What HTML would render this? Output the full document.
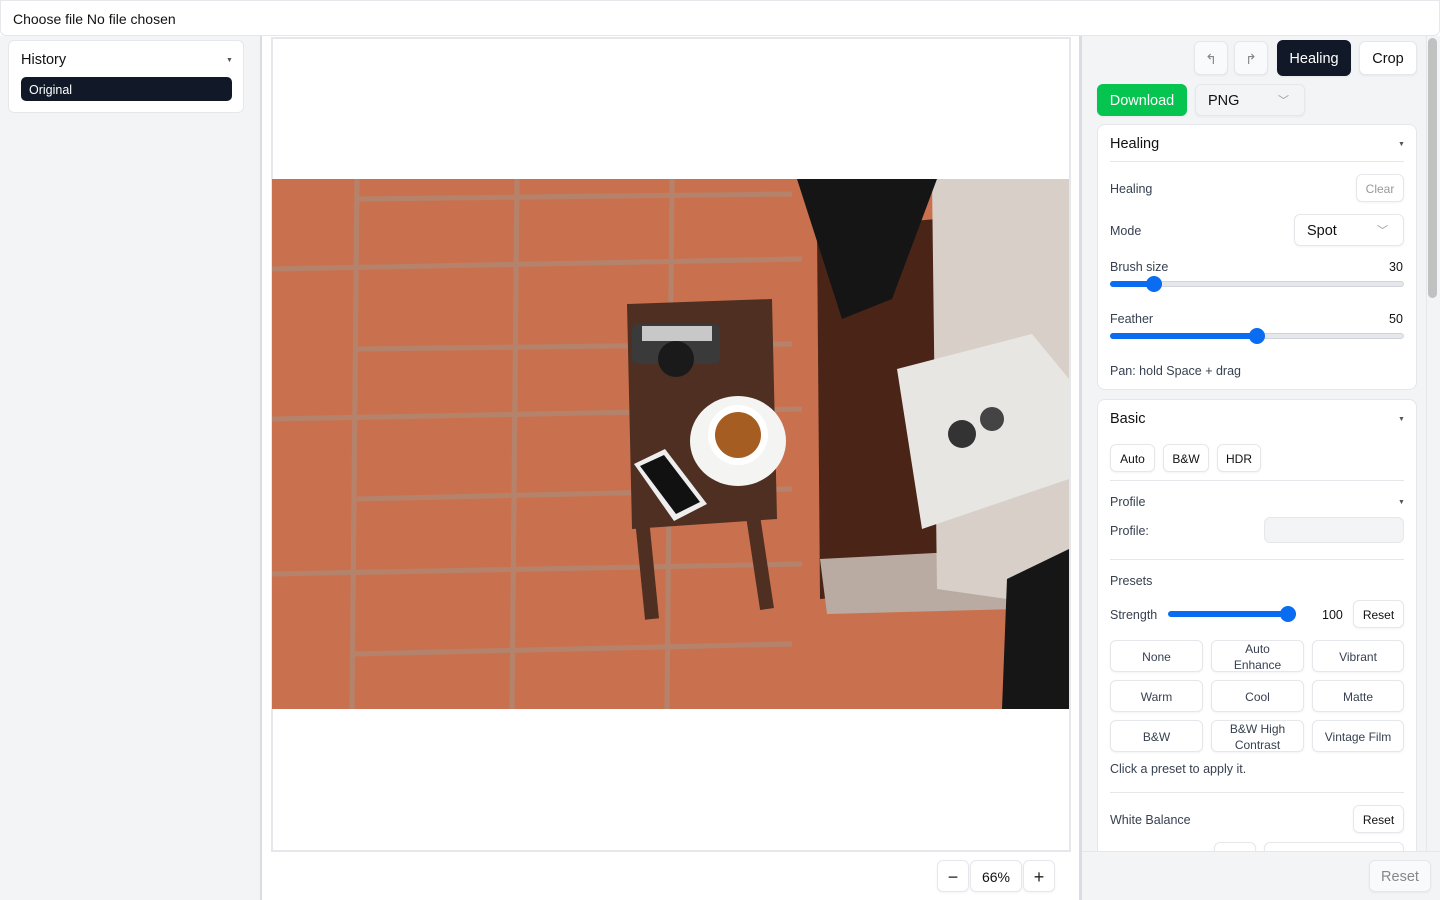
<!DOCTYPE html>
<html><head><style>
*{box-sizing:border-box;margin:0;padding:0}
body{width:1440px;height:900px;overflow:hidden;background:#fff;font-family:"Liberation Sans",sans-serif;position:relative;color:#111}
.a{position:absolute}
.btn{position:absolute;border:1px solid #e5e7eb;border-radius:6px;background:#fff;font-size:12px;display:flex;align-items:center;justify-content:center;text-align:center;line-height:16px;color:#374151;box-shadow:0 1px 2px rgba(0,0,0,.05);padding-top:1px}
.lbl{position:absolute;font-size:12.5px;color:#374151;margin-top:1px}
.hr{position:absolute;height:1px;background:#e5e7eb}
.track{position:absolute;height:6px;border-radius:3px;background:#e5e7eb;border:1px solid #d1d5db}
.fill{position:absolute;height:6px;border-radius:3px;background:#0a6cf0}
.knob{position:absolute;width:16px;height:16px;border-radius:50%;background:#0a6cf0}
.tri{position:absolute;font-size:7px;color:#555}
</style></head><body>
<div class="a" style="left:0;top:0;width:1440px;height:36px;border:1px solid #e5e7eb;border-radius:0 0 6px 6px;background:#fff"></div>
<div class="a" style="left:13px;top:11px;font-size:14px;color:#111">Choose file No file chosen</div>

<div class="a" style="left:0;top:36px;width:253px;height:864px;background:#f3f4f6"></div>
<div class="a" style="left:253px;top:36px;width:8px;height:864px;background:#f3f4f6"></div>
<div class="a" style="left:260px;top:36px;width:2px;height:864px;background:#d8dce3"></div>
<div class="a" style="left:8px;top:40px;width:236px;height:73px;background:#fff;border:1px solid #e5e7eb;border-radius:6px"></div>
<div class="a" style="left:21px;top:52px;font-size:14.5px">History</div>
<div class="tri" style="left:226px;top:57px">▼</div>
<div class="a" style="left:21px;top:77px;width:211px;height:24px;background:#111827;border-radius:5px;color:#fff;font-size:12.5px;padding:6px 8px">Original</div>

<div class="a" style="left:271px;top:37px;width:800px;height:815px;border:2px solid #e5e7eb;background:#fff"></div>
<svg class="a" style="left:272px;top:179px" width="797" height="530" viewBox="0 0 797 530">
<rect width="797" height="530" fill="#c9714e"/>
<g stroke="#a99080" stroke-width="5" opacity=".6">
<line x1="0" y1="90" x2="530" y2="80"/><line x1="0" y1="240" x2="530" y2="230"/><line x1="0" y1="395" x2="530" y2="385"/>
<line x1="85" y1="0" x2="80" y2="530"/><line x1="245" y1="0" x2="240" y2="530"/><line x1="400" y1="0" x2="395" y2="530"/>
<line x1="85" y1="20" x2="520" y2="15"/><line x1="85" y1="170" x2="520" y2="165"/><line x1="85" y1="320" x2="520" y2="310"/><line x1="80" y1="475" x2="520" y2="465"/>
</g>
<path d="M545 50 L665 40 L665 410 L548 420 Z" fill="#4a2416"/>
<path d="M548 380 L740 370 L745 430 L555 435 Z" fill="#b9aba2"/>
<path d="M660 0 L797 0 L797 530 L740 530 L735 420 L665 410 Z" fill="#d8d0c8"/>
<path d="M525 0 L665 0 L620 120 L570 140 Z" fill="#151515"/>
<path d="M625 190 L760 155 L797 200 L797 300 L650 350 Z" fill="#e8e6e2"/>
<circle cx="690" cy="255" r="14" fill="#333"/><circle cx="720" cy="240" r="12" fill="#444"/>
<path d="M735 400 L797 370 L797 530 L730 530 Z" fill="#161616"/>
<path d="M355 125 L500 120 L505 340 L360 350 Z" fill="#4e2f22"/>
<path d="M370 340 L380 440 M480 330 L495 430" stroke="#4e2f22" stroke-width="14"/>
<ellipse cx="466" cy="262" rx="48" ry="45" fill="#f4f4f2"/>
<circle cx="466" cy="256" r="30" fill="#fff"/><circle cx="466" cy="256" r="23" fill="#a55d22"/>
<rect x="360" y="145" width="88" height="40" rx="6" fill="#3a3a3a"/>
<rect x="370" y="147" width="70" height="15" fill="#c8c8c8"/>
<circle cx="404" cy="180" r="18" fill="#1a1a1a"/>
<path d="M362 285 L393 270 L435 325 L402 342 Z" fill="#eee"/><path d="M368 287 L392 276 L428 323 L404 335 Z" fill="#111"/>
</svg>

<div class="btn" style="left:937px;top:860px;width:32px;height:32px;font-size:18px;color:#222">−</div>
<div class="btn" style="left:970px;top:860px;width:52px;height:32px;font-size:14px;color:#111">66%</div>
<div class="btn" style="left:1023px;top:860px;width:32px;height:32px;font-size:18px;color:#222">+</div>

<div class="a" style="left:1079px;top:36px;width:3px;height:864px;background:#d8dce3"></div>
<div class="a" style="left:1082px;top:36px;width:358px;height:864px;background:#f3f4f6"></div>
<div class="a" style="left:1428px;top:38px;width:9px;height:260px;background:#c1c1c1;border-radius:5px"></div>
<div class="a" style="left:1426px;top:36px;width:1px;height:815px;background:#e5e7eb"></div>

<div class="btn" style="left:1194px;top:41px;width:34px;height:34px;background:#f9fafb;color:#888;font-size:14px">↰</div>
<div class="btn" style="left:1234px;top:41px;width:34px;height:34px;background:#f9fafb;color:#888;font-size:14px">↱</div>
<div class="btn" style="left:1277px;top:40px;width:74px;height:36px;background:#111827;border-color:#111827;color:#fff;font-size:14.5px">Healing</div>
<div class="btn" style="left:1359px;top:41px;width:58px;height:34px;color:#111;font-size:14.5px">Crop</div>
<div class="btn" style="left:1097px;top:84px;width:90px;height:32px;background:#05c44f;border-color:#05c44f;color:#fff;font-size:14.5px">Download</div>
<div class="btn" style="left:1195px;top:84px;width:110px;height:32px;background:#f3f4f6;justify-content:flex-start;padding-left:12px;color:#111;font-size:14.5px">PNG<span style="position:absolute;left:82px;color:#999;font-size:11px">﹀</span></div>

<div class="a" style="left:1097px;top:124px;width:320px;height:266px;background:#fff;border:1px solid #e5e7eb;border-radius:8px"></div>
<div class="a" style="left:1110px;top:136px;font-size:14.5px">Healing</div>
<div class="tri" style="left:1398px;top:141px">▼</div>
<div class="hr" style="left:1110px;top:161px;width:294px"></div>
<div class="lbl" style="left:1110px;top:181px">Healing</div>
<div class="btn" style="left:1356px;top:174px;width:48px;height:28px;color:#999">Clear</div>
<div class="lbl" style="left:1110px;top:223px">Mode</div>
<div class="btn" style="left:1294px;top:214px;width:110px;height:32px;justify-content:flex-start;padding-left:12px;color:#111;font-size:14.5px">Spot<span style="position:absolute;left:82px;color:#999;font-size:11px">﹀</span></div>
<div class="lbl" style="left:1110px;top:259px">Brush size</div><div class="lbl" style="left:1389px;top:259px;color:#111">30</div>
<div class="track" style="left:1110px;top:281px;width:294px"></div><div class="fill" style="left:1110px;top:281px;width:44px"></div><div class="knob" style="left:1146px;top:276px"></div>
<div class="lbl" style="left:1110px;top:311px">Feather</div><div class="lbl" style="left:1389px;top:311px;color:#111">50</div>
<div class="track" style="left:1110px;top:333px;width:294px"></div><div class="fill" style="left:1110px;top:333px;width:147px"></div><div class="knob" style="left:1249px;top:328px"></div>
<div class="lbl" style="left:1110px;top:363px">Pan: hold Space + drag</div>

<div class="a" style="left:1097px;top:399px;width:320px;height:460px;background:#fff;border:1px solid #e5e7eb;border-radius:8px"></div>
<div class="a" style="left:1110px;top:411px;font-size:14.5px">Basic</div>
<div class="tri" style="left:1398px;top:416px">▼</div>
<div class="btn" style="left:1110px;top:444px;width:45px;height:28px;color:#111">Auto</div>
<div class="btn" style="left:1163px;top:444px;width:46px;height:28px;color:#111">B&amp;W</div>
<div class="btn" style="left:1217px;top:444px;width:44px;height:28px;color:#111">HDR</div>
<div class="hr" style="left:1110px;top:480px;width:294px"></div>
<div class="lbl" style="left:1110px;top:494px">Profile</div>
<div class="tri" style="left:1398px;top:499px">▼</div>
<div class="lbl" style="left:1110px;top:523px">Profile:</div>
<div class="a" style="left:1264px;top:517px;width:140px;height:26px;background:#f3f4f6;border:1px solid #e5e7eb;border-radius:6px"></div>
<div class="hr" style="left:1110px;top:559px;width:294px"></div>
<div class="lbl" style="left:1110px;top:573px">Presets</div>
<div class="lbl" style="left:1110px;top:607px">Strength</div>
<div class="fill" style="left:1168px;top:611px;width:128px"></div><div class="knob" style="left:1280px;top:606px"></div>
<div class="lbl" style="left:1322px;top:607px;color:#111">100</div>
<div class="btn" style="left:1353px;top:600px;width:51px;height:28px;color:#111">Reset</div>
<div class="btn" style="left:1110px;top:640px;width:93px;height:32px">None</div>
<div class="btn" style="left:1211px;top:640px;width:93px;height:32px">Auto<br>Enhance</div>
<div class="btn" style="left:1312px;top:640px;width:92px;height:32px">Vibrant</div>
<div class="btn" style="left:1110px;top:680px;width:93px;height:32px">Warm</div>
<div class="btn" style="left:1211px;top:680px;width:93px;height:32px">Cool</div>
<div class="btn" style="left:1312px;top:680px;width:92px;height:32px">Matte</div>
<div class="btn" style="left:1110px;top:720px;width:93px;height:32px">B&amp;W</div>
<div class="btn" style="left:1211px;top:720px;width:93px;height:32px">B&amp;W High<br>Contrast</div>
<div class="btn" style="left:1312px;top:720px;width:92px;height:32px">Vintage Film</div>
<div class="lbl" style="left:1110px;top:761px">Click a preset to apply it.</div>
<div class="hr" style="left:1110px;top:792px;width:294px"></div>
<div class="lbl" style="left:1110px;top:812px">White Balance</div>
<div class="btn" style="left:1353px;top:805px;width:51px;height:28px;color:#111">Reset</div>
<div class="btn" style="left:1214px;top:842px;width:42px;height:28px"></div>
<div class="btn" style="left:1264px;top:842px;width:140px;height:28px"></div>
<div class="a" style="left:1082px;top:851px;width:358px;height:49px;background:#f3f4f6;border-top:1px solid #e5e7eb"></div>
<div class="btn" style="left:1369px;top:860px;width:62px;height:32px;background:#f9fafb;color:#888;font-size:14.5px">Reset</div>
</body></html>
